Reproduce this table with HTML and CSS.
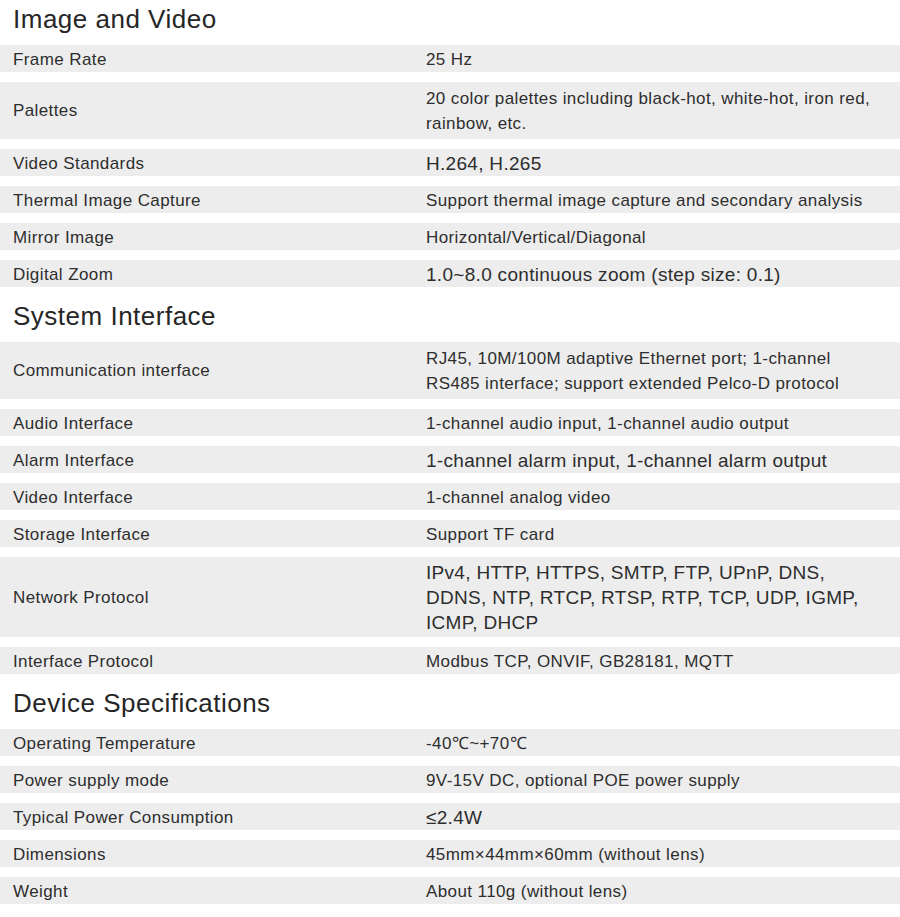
FILE: index.html
```html
<!DOCTYPE html>
<html lang="en">
<head>
  <meta charset="UTF-8">
  <meta name="viewport" content="width=device-width, initial-scale=1.0">
  <title>Specifications</title>
  <link rel="stylesheet" href="styles.css">
</head>
<body>

  <div class="specs">

    <!-- Image and Video -->
    <h2 class="spec-title">Image and Video</h2>
    <div class="spec-row"><div class="spec-name">Frame Rate</div><div class="spec-value">25 Hz</div></div>
    <div class="spec-row two-lines"><div class="spec-name">Palettes</div><div class="spec-value">20 color palettes including black-hot, white-hot, iron red,<br>rainbow, etc.</div></div>
    <div class="spec-row"><div class="spec-name">Video Standards</div><div class="spec-value large">H.264, H.265</div></div>
    <div class="spec-row"><div class="spec-name">Thermal Image Capture</div><div class="spec-value">Support thermal image capture and secondary analysis</div></div>
    <div class="spec-row"><div class="spec-name">Mirror Image</div><div class="spec-value">Horizontal/Vertical/Diagonal</div></div>
    <div class="spec-row"><div class="spec-name">Digital Zoom</div><div class="spec-value large">1.0~8.0 continuous zoom (step size: 0.1)</div></div>

    <!-- System Interface -->
    <h2 class="spec-title">System Interface</h2>
    <div class="spec-row two-lines"><div class="spec-name">Communication interface</div><div class="spec-value">RJ45, 10M/100M adaptive Ethernet port; 1-channel<br>RS485 interface; support extended Pelco-D protocol</div></div>
    <div class="spec-row"><div class="spec-name">Audio Interface</div><div class="spec-value">1-channel audio input, 1-channel audio output</div></div>
    <div class="spec-row"><div class="spec-name">Alarm Interface</div><div class="spec-value large">1-channel alarm input, 1-channel alarm output</div></div>
    <div class="spec-row"><div class="spec-name">Video Interface</div><div class="spec-value">1-channel analog video</div></div>
    <div class="spec-row"><div class="spec-name">Storage Interface</div><div class="spec-value">Support TF card</div></div>
    <div class="spec-row three-lines"><div class="spec-name">Network Protocol</div><div class="spec-value large">IPv4, HTTP, HTTPS, SMTP, FTP, UPnP, DNS,<br>DDNS, NTP, RTCP, RTSP, RTP, TCP, UDP, IGMP,<br>ICMP, DHCP</div></div>
    <div class="spec-row"><div class="spec-name">Interface Protocol</div><div class="spec-value">Modbus TCP, ONVIF, GB28181, MQTT</div></div>

    <!-- Device Specifications -->
    <h2 class="spec-title">Device Specifications</h2>
    <div class="spec-row"><div class="spec-name">Operating Temperature</div><div class="spec-value">-40℃~+70℃</div></div>
    <div class="spec-row"><div class="spec-name">Power supply mode</div><div class="spec-value">9V-15V DC, optional POE power supply</div></div>
    <div class="spec-row"><div class="spec-name">Typical Power Consumption</div><div class="spec-value large">≤2.4W</div></div>
    <div class="spec-row"><div class="spec-name">Dimensions</div><div class="spec-value">45mm×44mm×60mm (without lens)</div></div>
    <div class="spec-row"><div class="spec-name">Weight</div><div class="spec-value">About 110g (without lens)</div></div>

  </div>

</body>
</html>
```

FILE: styles.css
```css
body {
  font-family: "Liberation Sans", Arial, sans-serif;
  background-color: #fff;
  color: #2e2e2e;
  margin: 0;
}

.specs {
  width: 900px;
}

.spec-title {
  font-size: 26px;
  font-weight: normal;
  letter-spacing: 0.5px;
  line-height: 38px;
  margin: 0;
  padding: 0 0 7px 13px;
  color: #262626;
}

.spec-row {
  display: grid;
  grid-template-columns: 426px 1fr;
  align-items: center;
  background-color: #ededed;
  padding: 3px 0 0;
  margin-bottom: 10px;
  line-height: 24px;
  font-size: 17px;
  letter-spacing: 0.4px;
}

/* taller rows for wrapped values */
.spec-row.two-lines {
  padding: 3.5px 0;
  line-height: 25px;
}

.spec-row.three-lines {
  padding: 2.5px 0;
  line-height: 25px;
}

.spec-name {
  padding-left: 13px;
}

.spec-value {
  padding-right: 10px;
  white-space: nowrap;
}

.spec-value.large {
  font-size: 19px;
  letter-spacing: 0.3px;
}
```
